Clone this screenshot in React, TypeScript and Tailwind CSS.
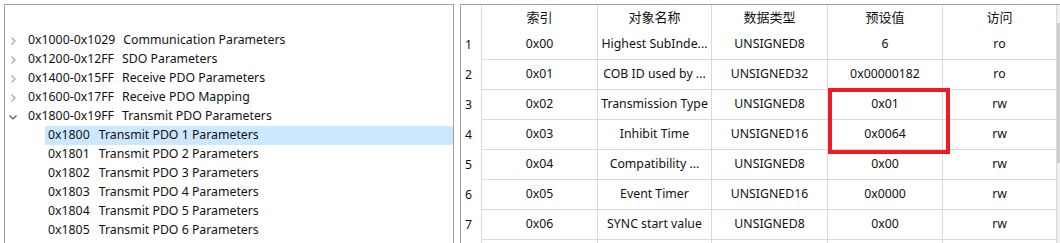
import React from "react";

const treeGroups = [
  { code: "0x1000-0x1029", name: "Communication Parameters", open: false },
  { code: "0x1200-0x12FF", name: "SDO Parameters", open: false },
  { code: "0x1400-0x15FF", name: "Receive PDO Parameters", open: false },
  { code: "0x1600-0x17FF", name: "Receive PDO Mapping", open: false },
  { code: "0x1800-0x19FF", name: "Transmit PDO Parameters", open: true },
];

const children = [
  { code: "0x1800", name: "Transmit PDO 1 Parameters" },
  { code: "0x1801", name: "Transmit PDO 2 Parameters" },
  { code: "0x1802", name: "Transmit PDO 3 Parameters" },
  { code: "0x1803", name: "Transmit PDO 4 Parameters" },
  { code: "0x1804", name: "Transmit PDO 5 Parameters" },
  { code: "0x1805", name: "Transmit PDO 6 Parameters" },
];

const headers = ["索引", "对象名称", "数据类型", "预设值", "访问"];

const rows = [
  ["0x00", "Highest SubInde...", "UNSIGNED8", "6", "ro"],
  ["0x01", "COB ID used by ...", "UNSIGNED32", "0x00000182", "ro"],
  ["0x02", "Transmission Type", "UNSIGNED8", "0x01", "rw"],
  ["0x03", "Inhibit Time", "UNSIGNED16", "0x0064", "rw"],
  ["0x04", "Compatibility ...", "UNSIGNED8", "0x00", "rw"],
  ["0x05", "Event Timer", "UNSIGNED16", "0x0000", "rw"],
  ["0x06", "SYNC start value", "UNSIGNED8", "0x00", "rw"],
];

const Chevron = ({ open }: { open: boolean }) => (
  <svg width="8" height="8" viewBox="0 0 8 8" className="shrink-0">
    {open ? (
      <polyline points="0.5,2.5 4,6 7.5,2.5" fill="none" stroke="#5a5a5a" strokeWidth="1.2" />
    ) : (
      <polyline points="2.5,0.5 6,4 2.5,7.5" fill="none" stroke="#a6a6a6" strokeWidth="1.2" />
    )}
  </svg>
);

const cols = "grid grid-cols-[21px_116px_114px_116px_115px_114px]";

export default function App() {
  return (
    <div
      className="w-[1060px] h-[243px] bg-white flex overflow-hidden text-[12.3px] text-[#111]"
      style={{ fontFamily: '"Noto Sans", "Noto Sans CJK SC", sans-serif' }}
    >
      {/* Object tree */}
      <div className="ml-[4px] mt-[4px] w-[450px] border-l border-t border-r border-[#a0a0a0] pt-[26px]">
        {treeGroups.map((g) => (
          <div key={g.code} className="h-[19px] flex items-center pl-[4px] gap-[11px] whitespace-nowrap">
            <Chevron open={g.open} />
            <span>
              <span className="mr-[8px]">{g.code}</span>
              {g.name}
            </span>
          </div>
        ))}
        {children.map((c, i) => (
          <div
            key={c.code}
            className={`h-[19px] ml-[40px] pl-[3px] flex items-center whitespace-nowrap ${
              i === 0 ? "bg-[#cce8ff]" : ""
            }`}
          >
            <span className="mr-[9px]">{c.code}</span>
            {c.name}
          </div>
        ))}
      </div>

      {/* Sub-index table */}
      <div className="relative ml-[6px] mt-[4px] w-[600px] border-l border-t border-[#a0a0a0] flex">
        <div className="w-[596px]">
          <div className={`${cols} h-[25px]`}>
            <div className="border-r border-[#dadada]" />
            {headers.map((h) => (
              <div key={h} className="border-r border-[#dadada] flex items-center justify-center text-[13px]">
                {h}
              </div>
            ))}
          </div>
          {rows.map((r, i) => (
            <div key={i} className={`${cols} h-[30px]`}>
              <div className="border-r border-[#dadada] flex items-center pl-[4px]">{i + 1}</div>
              {r.map((v, j) => (
                <div
                  key={j}
                  className="border-r border-b border-[#dadada] flex items-center justify-center whitespace-nowrap"
                >
                  {v}
                </div>
              ))}
            </div>
          ))}
          <div className={`${cols} h-[30px]`}>
            <div className="border-r border-[#dadada]" />
            {headers.map((h) => (
              <div key={h} className="border-r border-[#dadada]" />
            ))}
          </div>
        </div>
        {/* scrollbar */}
        <div className="w-[3px] bg-[#f0f0f0] pt-[18px]">
          <div className="h-[140px] bg-[#cdcdcd]" />
        </div>

        {/* highlight box */}
        <div className="absolute left-[367px] top-[83px] w-[122px] h-[66px] border-4 border-[#ed1c24]" />
      </div>
    </div>
  );
}
